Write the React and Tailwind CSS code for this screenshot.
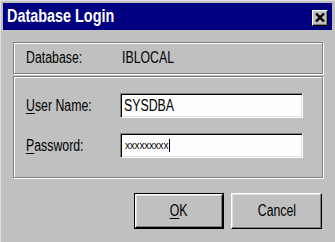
import React from "react";

const font = "font-['Liberation_Sans',Arial,sans-serif]";

// narrow the Arial-like face to the condensed look of the old dialog font
function Narrow({ children, className = "" }) {
    return (
        <span className={`inline-block whitespace-nowrap scale-x-[0.77] ${className}`}>
            {children}
        </span>
    );
}

function CloseIcon() {
    return (
        <svg width="10" height="9" viewBox="0 0 10 9">
            <path d="M1 0.5 L9 8.5 M9 0.5 L1 8.5" stroke="#000" strokeWidth="2.4" />
        </svg>
    );
}

function Field({ children }) {
    return (
        <div className="w-[183px] h-[25px] bg-[#fdfdfd] border border-t-[#808080] border-l-[#808080] border-b-white border-r-white shadow-[inset_1px_1px_0_#000,inset_-1px_-1px_0_#dfdfdf] flex items-center pl-[3px]">
            {children}
        </div>
    );
}

function Button({ children, primary }) {
    const face = (
        <div className="flex-1 flex items-center justify-center bg-[#c0c0c0] border border-t-white border-l-white border-b-black border-r-black shadow-[inset_-1px_-1px_0_#808080,inset_1px_1px_0_#dfdfdf] text-[16px] text-black">
            <Narrow className="origin-center">{children}</Narrow>
        </div>
    );
    if (primary) {
        return (
            <div className="w-[90px] h-[36px] flex border border-black">
                {face}
            </div>
        );
    }
    return <div className="w-[91px] h-[36px] flex">{face}</div>;
}

export default function App() {
    return (
        <div className={`w-[335px] h-[242px] bg-[#c0c0c0] overflow-hidden border-t border-l border-[#dfdfdf] ${font}`}>
            <div className="pt-[2px] pl-[2px] pr-[3px]">
                <div className="h-[27px] bg-[#000080] flex items-center justify-between pl-[4px] pr-[4px]">
                    <span className="inline-block whitespace-nowrap text-white font-bold text-[18px] scale-x-[0.8] origin-left">
                        Database Login
                    </span>
                    <div className="w-[16px] h-[16px] mt-[2px] bg-[#c0c0c0] border border-t-white border-l-white border-b-black border-r-black shadow-[inset_-1px_-1px_0_#808080] flex items-center justify-center">
                        <CloseIcon />
                    </div>
                </div>
            </div>

            <div className="px-[12px]">
                <div className="mt-[12px] h-[32px] border border-[#808080] shadow-[inset_1px_1px_0_#fff,1px_1px_0_#fff] flex items-center pl-[12px] text-[16px] text-black">
                    <span className="w-[96px]">
                        <Narrow className="origin-left">Database:</Narrow>
                    </span>
                    <Narrow className="origin-left">IBLOCAL</Narrow>
                </div>

                <div className="mt-[2px] h-[102px] border border-[#808080] shadow-[inset_1px_1px_0_#fff,1px_1px_0_#fff] pl-[12px] pt-[16px] flex flex-col gap-[15px] text-[16px] text-black">
                    <div className="flex items-center">
                        <span className="w-[94px]">
                            <Narrow className="origin-left">
                                <span className="underline underline-offset-2">U</span>ser Name:
                            </Narrow>
                        </span>
                        <Field>
                            <Narrow className="origin-left">SYSDBA</Narrow>
                        </Field>
                    </div>
                    <div className="flex items-center">
                        <span className="w-[94px]">
                            <Narrow className="origin-left">
                                <span className="underline underline-offset-2">P</span>assword:
                            </Narrow>
                        </span>
                        <Field>
                            <span className="text-[10px] leading-none tracking-[-0.2px] pl-[1px]">xxxxxxxxx</span>
                            <span className="w-px h-[13px] bg-black ml-[1px]"></span>
                        </Field>
                    </div>
                </div>

                <div className="mt-[15px] flex justify-end gap-[7px] pr-px">
                    <Button primary>
                        <span className="underline underline-offset-2">O</span>K
                    </Button>
                    <Button>Cancel</Button>
                </div>
            </div>
        </div>
    );
}
